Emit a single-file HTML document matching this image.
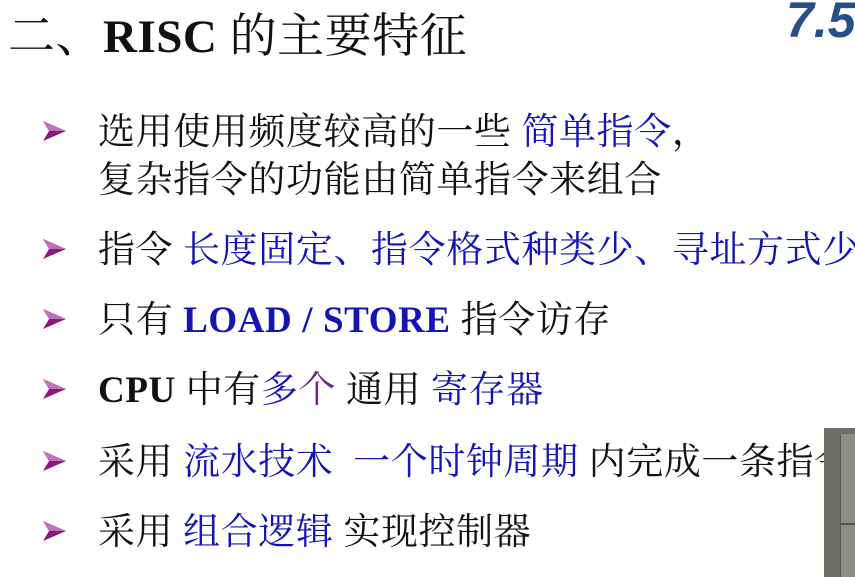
<!DOCTYPE html>
<html><head><meta charset="utf-8"><style>
html,body{margin:0;padding:0;}
body{width:855px;height:577px;overflow:hidden;background:#fff;position:relative;font-family:"Liberation Serif","Noto Serif CJK SC","Noto Sans CJK SC",serif;color:#111;}
.t{position:absolute;white-space:nowrap;font-size:37px;line-height:40px;letter-spacing:0.6px;}
.title{position:absolute;left:8px;top:12px;font-size:47px;line-height:50px;white-space:nowrap;letter-spacing:0.5px;}
.b{color:#1414b4;}
.bb{color:#1414b4;font-weight:bold;}
.p{color:#6a2a8a;}
svg.a{position:absolute;left:42px;width:25px;height:22px;}
.num{position:absolute;left:786px;top:-9px;font-family:"Liberation Sans",sans-serif;font-style:italic;font-size:50px;color:#264f86;font-weight:bold;}
.photo{position:absolute;left:824px;top:428px;width:31px;height:149px;background:#6f6e68;}
.photo .in{position:absolute;left:16px;top:6px;width:15px;height:143px;background:#8e8d87;border-left:1px solid #5a5955;}
.photo .h{position:absolute;left:16px;top:95px;width:15px;height:2px;background:#55544f;}
</style></head><body>
<div class="title">二、<b style="font-family:'Liberation Serif',serif">RISC</b> 的主要特征</div>
<div class="num">7.5</div>
<svg class="a" style="top:120px" viewBox="0 0 25 22"><path d="M1 1 L24 11 L1 21 L7 11 Z" fill="#8a1a7a"/><path d="M1 1 L24 11 L7 11 Z" fill="#c070b8"/></svg>
<div class="t" style="left:98px;top:113px">选用使用频度较高的一些 <span class="b">简单指令</span>，</div>
<div class="t" style="left:98px;top:161px">复杂指令的功能由简单指令来组合</div>
<svg class="a" style="top:238px" viewBox="0 0 25 22"><path d="M1 1 L24 11 L1 21 L7 11 Z" fill="#8a1a7a"/><path d="M1 1 L24 11 L7 11 Z" fill="#c070b8"/></svg>
<div class="t" style="left:98px;top:231px">指令 <span class="b">长度固定、指令格式种类少、寻址方式少</span></div>
<svg class="a" style="top:308px" viewBox="0 0 25 22"><path d="M1 1 L24 11 L1 21 L7 11 Z" fill="#8a1a7a"/><path d="M1 1 L24 11 L7 11 Z" fill="#c070b8"/></svg>
<div class="t" style="left:98px;top:301px">只有 <span class="bb">LOAD / STORE</span> 指令访存</div>
<svg class="a" style="top:378px" viewBox="0 0 25 22"><path d="M1 1 L24 11 L1 21 L7 11 Z" fill="#8a1a7a"/><path d="M1 1 L24 11 L7 11 Z" fill="#c070b8"/></svg>
<div class="t" style="left:98px;top:371px"><b>CPU</b> 中有<span class="b">多</span><span class="p">个</span> 通用 <span class="b">寄存器</span></div>
<svg class="a" style="top:450px" viewBox="0 0 25 22"><path d="M1 1 L24 11 L1 21 L7 11 Z" fill="#8a1a7a"/><path d="M1 1 L24 11 L7 11 Z" fill="#c070b8"/></svg>
<div class="t" style="left:98px;top:443px">采用 <span class="b">流水技术&nbsp; 一个时钟周期</span> 内完成一条指令</div>
<svg class="a" style="top:520px" viewBox="0 0 25 22"><path d="M1 1 L24 11 L1 21 L7 11 Z" fill="#8a1a7a"/><path d="M1 1 L24 11 L7 11 Z" fill="#c070b8"/></svg>
<div class="t" style="left:98px;top:513px">采用 <span class="b">组合逻辑</span> 实现控制器</div>
<div class="photo"><div class="in"></div><div class="h"></div></div>
</body></html>
